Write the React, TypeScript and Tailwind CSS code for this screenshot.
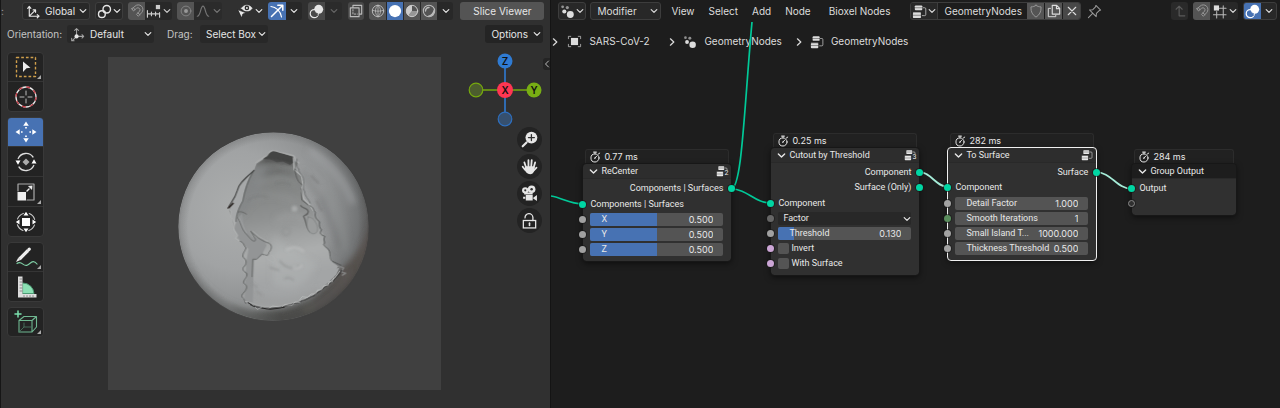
import type { ReactNode } from "react";

/* ---------- icons ---------- */

function Svg({ box = "0 0 16 16", className = "size-4", children }: { box?: string; className?: string; children: ReactNode }) {
  return (
    <svg viewBox={box} className={`${className} shrink-0`} fill="none" stroke="currentColor" strokeLinecap="round" strokeLinejoin="round" aria-hidden="true">
      {children}
    </svg>
  );
}

const Chevron = ({ className = "size-2" }: { className?: string }) => (
  <Svg box="0 0 8 8" className={className}><path d="M1.2 2.6 4 5.4 6.8 2.6" strokeWidth="1.2" /></Svg>
);
const ChevronRight = () => (
  <Svg box="0 0 8 8" className="size-2"><path d="M2.4.8 5.8 4 2.4 7.2" strokeWidth="1.2" /></Svg>
);
const AxesIcon = () => (
  <Svg className="size-[15px]">
    <path d="M3.5 3v10h10M3.5 13l6-6M1.8 4.6 3.5 2.6l1.7 2M12 11.3l2 1.7-2 1.7M7.6 6.3h2.6v2.6" strokeWidth="1.2" />
  </Svg>
);
const PivotIcon = () => (
  <Svg className="size-[15px]">
    <circle cx="10.4" cy="5.6" r="4" strokeWidth="1.5" />
    <circle cx="5.2" cy="10.8" r="3.6" strokeWidth="1.5" />
    <circle cx="7.8" cy="8.2" r="1.3" fill="currentColor" stroke="none" />
  </Svg>
);
const MagnetIcon = () => (
  <Svg className="size-[14px]">
    <path d="M2.2 5.4 5.7 2.6a5.2 5.2 0 0 1 7.6 7.3L9.6 14 7.4 11.9l3.6-3.8a2.4 2.4 0 0 0-3.4-3.3L4 8 2.2 5.4ZM5.6 6.6 3.9 4.2M9 10.2l2.3 2" strokeWidth="1.1" />
  </Svg>
);
const IncrementIcon = () => (
  <Svg className="size-[15px]">
    <path d="M1.5 7v7M14.5 9v5M1.5 10.5h13M5.8 8.5v4M10.2 8.5v4" strokeWidth="1.2" />
    <rect x="10.5" y="1" width="4.5" height="4.5" fill="currentColor" stroke="none" />
  </Svg>
);
const PropIcon = () => (
  <Svg className="size-[14px]"><circle cx="8" cy="8" r="5.6" strokeWidth="1.1" opacity=".7" /><circle cx="8" cy="8" r="2.2" fill="currentColor" stroke="none" /></Svg>
);
const CurveIcon = () => (
  <Svg className="size-[14px]"><path d="M1.5 14C5.5 14 5 2.5 8 2.5S10.500 14 14.500 14" strokeWidth="1.3" /></Svg>
);
const EyeCursorIcon = () => (
  <Svg className="size-4">
    <path d="M4.500 5.200C7 1.200 12.500 1.200 15.200 5.200 12.800 9 7.400 9 4.500 5.200Z" fill="currentColor" strokeWidth=".6" />
    <circle cx="9.900" cy="4.900" r="2.300" fill="#282828" stroke="none" />
    <circle cx="9.900" cy="4.900" r="1" fill="currentColor" stroke="none" />
    <path d="m1 6.800 8 3-3.200 1.200L4.600 14.500Z" fill="currentColor" stroke="#282828" strokeWidth=".6" />
  </Svg>
);
const GizmoIcon = () => (
  <Svg className="size-4">
    <path d="M2 3.500C7 4 11.500 8 12.500 14" strokeWidth="1.200" />
    <path d="M2.500 13.500 13.500 2.500M8.800 2.200h5v5" strokeWidth="1.500" />
  </Svg>
);
const OverlayIcon = ({ cut }: { cut: string }) => (
  <Svg className="size-[15px]">
    <circle cx="5.600" cy="10.300" r="4.300" strokeWidth="1.300" />
    <circle cx="10.300" cy="5.700" r="4.800" fill="currentColor" stroke="none" />
    <path d="M5.600 7.300a4 4 0 0 0 3.600 4.800" stroke={cut} strokeWidth="1" />
    <path d="M6.200 8a4 4 0 0 0 3.200 2.600" stroke={cut} strokeWidth=".8" />
  </Svg>
);
const XrayIcon = () => (
  <Svg className="size-[14px]">
    <path d="M1.500 4.500h10v10h-10ZM4.500 4.500v-3h10v10h-3" strokeWidth="1.300" />
    <path d="M4.500 6.500v5h5" strokeWidth="1.100" strokeDasharray="1.500 1.800" />
  </Svg>
);
const WireIcon = () => (
  <Svg className="size-[14px]"><circle cx="8" cy="8" r="6.500" strokeWidth="1.100" /><path d="M1.500 7.200c4 1.400 9 1.400 13 0M8 1.500v13M8 1.500c-4 3-4 10 0 13M8 1.500c4 3 4 10 0 13" strokeWidth=".9" /></Svg>
);
const SolidIcon = () => (
  <Svg className="size-[14px]"><circle cx="8" cy="8" r="7" fill="currentColor" stroke="none" /></Svg>
);
const MaterialIcon = () => (
  <Svg className="size-[14px]"><circle cx="8" cy="8" r="6.500" strokeWidth="1.100" /><path d="M8 1.500v6.500L3.800 13A6.500 6.500 0 0 1 8 1.500Z" fill="currentColor" stroke="none" /><path d="M8 8h6.500A6.500 6.500 0 0 1 4 13Z" fill="currentColor" stroke="none" opacity=".55" /></Svg>
);
const RenderedIcon = () => (
  <Svg className="size-[14px]"><circle cx="8" cy="8" r="6.500" strokeWidth="1.200" /><path d="M4 8a4.200 4.200 0 0 1 4-4" strokeWidth="1.600" /><path d="M13.800 7A6.500 6.500 0 0 1 7 14C10.500 13.200 13 10.500 13.800 7Z" fill="currentColor" strokeWidth="1.200" /></Svg>
);
const LocalAxesIcon = () => (
  <Svg className="size-[15px]">
    <path d="M7 10V2M5 3.600l2-2 2 2M7.500 10h7M12.800 8.200 14.600 10l-1.800 1.800M6.500 10.500l-4 4M1.800 12v2.600h2.600" strokeWidth="1.100" opacity=".65" />
    <circle cx="7" cy="10" r="2.200" fill="currentColor" stroke="none" />
  </Svg>
);
const GeoNodesIcon = ({ className = "size-[15px]" }: { className?: string }) => (
  <Svg className={className}>
    <g fill="currentColor" stroke="none">
      <circle cx="11" cy="11.200" r="3.700" />
      <circle cx="4.600" cy="8" r="2.200" />
      <circle cx="2.800" cy="3" r="1.500" opacity=".6" />
      <circle cx="7.800" cy="3.800" r="1.700" opacity=".6" />
    </g>
  </Svg>
);
const TreeIcon = ({ className = "size-[15px]" }: { className?: string }) => (
  <Svg className={className}>
    <g fill="currentColor" stroke="none">
      <rect x="3" y="1.500" width="8" height="5.200" rx="1" />
      <rect x="1" y="9.300" width="8.500" height="5.700" rx="1" />
    </g>
    <path d="M1.500 9.300h7.500M12 4h1.500a1.200 1.200 0 0 1 1.200 1.200v6a1.200 1.200 0 0 1-1.200 1.200H11" strokeWidth="1" opacity=".75" />
    <path d="M3 4h8" stroke="#282828" strokeWidth=".5" />
    <path d="M1 12h8.500" stroke="#282828" strokeWidth=".5" />
  </Svg>
);
const ObjectIcon = () => (
  <Svg className="size-[15px]">
    <rect x="4.200" y="4.200" width="7.600" height="7.600" fill="currentColor" stroke="none" />
    <path d="M1.500 5V2.500H4M12 2.500h2.500V5M14.500 11v2.500H12M4 13.500H1.500V11" strokeWidth="1" opacity=".7" />
  </Svg>
);
const ShieldIcon = () => (
  <Svg className="size-[14px]"><path d="M8 1.500c1.500 1.200 3.500 1.800 5.800 1.800C14 9 12 12.500 8 15 4 12.500 2 9 2.200 3.300 4.500 3.300 6.500 2.700 8 1.500Z" strokeWidth="1.100" /></Svg>
);
const CopyIcon = () => (
  <Svg className="size-[14px]"><path d="M6 1.500h5l3.500 3.500v6.500H6ZM10.800 1.800v3.500h3.400" strokeWidth="1.300" /><path d="M4 5H1.500v9.500H10V13" strokeWidth="1.100" /></Svg>
);
const CloseIcon = () => (
  <Svg className="size-[12px]"><path d="m3 3 10 10M13 3 3 13" strokeWidth="1.500" /></Svg>
);
const PinIcon = () => (
  <Svg className="size-[15px]"><path d="m9.500 1.500 5 5-1.500.6-3 3-.2 3.400-3.500-3.600L2.700 6.300l3.500-.2 2.900-3ZM6 10l-4.500 4.500" strokeWidth="1.100" /></Svg>
);
const ParentIcon = () => (
  <Svg className="size-[14px]"><path d="M3.500 6 7 2.500 10.500 6M7 3v10.500h6.500" strokeWidth="1.300" /></Svg>
);
const GridSnapIcon = () => (
  <Svg className="size-[15px]">
    <path d="M5 8v7M12 2v13M8 4.500h7M1.500 11.500H15" strokeWidth="1.100" opacity=".8" />
    <rect x="2" y="1.500" width="5.500" height="5.500" fill="currentColor" stroke="none" />
  </Svg>
);
const StopwatchIcon = () => (
  <Svg className="size-3"><circle cx="8" cy="9.300" r="5.400" strokeWidth="1.300" /><path d="M6 1.500h4M8 1.500v2.300M12.500 4l1.800-1.200M8 9.300l2.200-2.400M7.200 9.500h1.200" strokeWidth="1.300" /></Svg>
);

/* toolbar drawings */

const SelectTool = () => (
  <Svg box="0 0 24 24" className="size-6">
    <rect x="2.500" y="2.500" width="19" height="19" stroke="#cf9f4c" strokeWidth="1.400" strokeDasharray="2.700 2" strokeLinecap="butt" />
    <path d="m9 6.500 7.500 6.300-4 .5L9 17Z" fill="#eee" stroke="none" />
  </Svg>
);
const CursorTool = () => (
  <Svg box="0 0 24 24" className="size-6">
    <circle cx="12" cy="12" r="10" stroke="#e8e8e8" strokeWidth="1.300" />
    <circle cx="12" cy="12" r="10" stroke="#c23b45" strokeWidth="1.300" strokeDasharray="3.900 3.954" strokeLinecap="butt" />
    <path d="M12 6v4M12 14v4M6 12h4M14 12h4" stroke="#bbb" strokeWidth="1" />
  </Svg>
);
const MoveTool = () => (
  <Svg box="0 0 24 24" className="size-6">
    <path d="M12 1.500 14.800 5.700H9.200ZM12 22.500l2.800-4.200H9.200ZM1.500 12l4.200-2.800v5.600ZM22.500 12l-4.200-2.800v5.600Z" fill="#fff" stroke="none" />
    <path d="M12 7v1.600M12 15.400V17M7 12h1.600M15.400 12H17" stroke="#fff" strokeWidth="1.700" strokeLinecap="butt" />
  </Svg>
);
const RotateTool = () => (
  <Svg box="0 0 24 24" className="size-6">
    <path d="M4.200 8.500a8.600 8.600 0 0 1 14.800-1.500M19.800 15.500A8.600 8.600 0 0 1 5 17" stroke="#ddd" strokeWidth="1.300" />
    <path d="M1.500 10.500h5L4 14.700ZM17.500 13.500h5L20 9.300Z" fill="#fff" stroke="none" />
    <path d="M12 8.500 15.500 12 12 15.500 8.500 12Z" fill="#aaa" stroke="none" />
  </Svg>
);
const ScaleTool = () => (
  <Svg box="0 0 24 24" className="size-6">
    <path d="M4 11V4h16v16h-7" stroke="#aaa" strokeWidth="1.200" />
    <rect x="3.500" y="12" width="8.500" height="8.500" fill="#eee" stroke="none" />
    <path d="m13 11 2-2" stroke="#eee" strokeWidth="1.500" />
    <path d="m18.500 5.500-.5 4.600-4.100-4.100Z" fill="#eee" stroke="none" />
  </Svg>
);
const TransformTool = () => (
  <Svg box="0 0 24 24" className="size-6">
    <rect x="8" y="8" width="8" height="8" fill="#fff" stroke="none" />
    <circle cx="12" cy="12" r="9" stroke="#ccc" strokeWidth="1.100" strokeDasharray="8.140 6" strokeDashoffset="-3" />
    <path d="m12 1.800 2.500 3.700h-5ZM12 22.200l2.500-3.700h-5ZM1.800 12l3.700-2.500v5ZM22.200 12l-3.700-2.500v5Z" fill="#fff" stroke="none" />
  </Svg>
);
const AnnotateTool = () => (
  <Svg box="0 0 24 24" className="size-6">
    <path d="M3 18.500c5-3.500 6.500 4 10.500 1.500 3.500-2 5.500-6 9.500-1" stroke="#7fcfa5" strokeWidth="1.200" />
    <path d="M5.500 14 14 5.500" stroke="#eee" strokeWidth="3.200" strokeLinecap="butt" />
    <path d="m14.800 4.700.5-.5" stroke="#eee" strokeWidth="3.200" />
    <path d="M4.200 12.800 2 17l4.400-2Z" fill="#eee" stroke="none" />
  </Svg>
);
const MeasureTool = () => (
  <Svg box="0 0 24 24" className="size-6">
    <path d="M9 8a11 11 0 0 1 11 10.500H9Z" fill="#8ce0b4" stroke="#4d9b74" strokeWidth="1" />
    <path d="M4 1.500h4.500V19H22.500v3.500H4Z" fill="#ddd" stroke="none" />
    <path d="M6 4h2M6 7h2M6 10h2M6 13h2M6 16h2M10 20.500v1.500M13 20.500v1.500M16 20.500v1.500M19 20.500v1.500" stroke="#777" strokeWidth=".8" />
  </Svg>
);
const AddCubeTool = () => (
  <Svg box="0 0 24 24" className="size-6">
    <path d="M5 10.500 10 6.500H22.500V17L18 22H5ZM5 10.500h13V22M18 10.500l4.500-4" stroke="#6fb791" strokeWidth="1.100" />
    <path d="M10 13v4l-5 5M10 17h8" stroke="#4d7c64" strokeWidth=".8" />
    <path d="M4 1v6M1 4h6" stroke="#7be0ad" strokeWidth="1.500" />
  </Svg>
);

/* navigation drawings */

const ZoomNav = () => (
  <Svg className="size-[17px]"><circle cx="9.800" cy="6.200" r="5.600" fill="#e6e6e6" stroke="none" /><path d="m5.200 10.800-3.600 3.600" stroke="#e6e6e6" strokeWidth="2" /><path d="M9.800 3.400V9M7 6.200h5.600" stroke="#303030" strokeWidth="1.200" /></Svg>
);
const PanNav = () => (
  <Svg className="size-[17px]">
    <path d="M4.800 9 3.200 4.200M7 8V2M9.600 8l.5-6M12 8.800l1.300-4.600M3.800 11 1.600 8.200" stroke="#e6e6e6" strokeWidth="1.700" />
    <path d="M4 7.800h8.800c.3 3.400-.5 7.400-4.200 7.400-2.900 0-4.200-2-5.400-4.700Z" fill="#e6e6e6" stroke="none" />
    <path d="m11.800 12 2.800-3" stroke="#e6e6e6" strokeWidth="1.600" />
  </Svg>
);
const CameraNav = () => (
  <Svg className="size-[17px]">
    <g fill="#e6e6e6" stroke="none">
      <circle cx="4" cy="5" r="3" /><circle cx="10" cy="4" r="3.600" />
      <path d="M3 7h8v2H3ZM4.500 9.500H11v5H4.500ZM11.500 12l3.500-2.500v5.500l-3.500-2.300ZM2 11h2v2H2Z" />
    </g>
    <circle cx="4" cy="5" r="1" fill="#303030" stroke="none" /><circle cx="10" cy="4" r="1.200" fill="#303030" stroke="none" />
  </Svg>
);
const LockNav = () => (
  <Svg className="size-[17px]"><rect x="2.200" y="8" width="11.600" height="7" stroke="#e6e6e6" strokeWidth="1.200" strokeLinejoin="miter" /><path d="M3.800 5.500a3.600 3.600 0 0 1 7.400-.5V8" stroke="#e6e6e6" strokeWidth="1.200" /><path d="M8 10.500v2.200" stroke="#e6e6e6" strokeWidth="1.500" /></Svg>
);

/* ---------- header controls ---------- */

const dark = "border border-[#3d3d3d] bg-[#282828]";

function Cell({ label, className = "", children }: { label: string; className?: string; children: ReactNode }) {
  return (
    <button type="button" aria-label={label} className={`flex h-full items-center justify-center ${className}`}>
      {children}
    </button>
  );
}

function Group({ className = "", children }: { className?: string; children: ReactNode }) {
  return <div className={`flex h-[18px] shrink-0 items-center overflow-hidden rounded-[3px] ${className}`}>{children}</div>;
}

function Dropdown({ label, value, icon, className = "", pad }: { label: string; value: string; icon?: ReactNode; className?: string; pad: string }) {
  return (
    <div className={`relative flex h-[18px] shrink-0 items-center rounded-[3px] ${dark} ${className}`}>
      {icon && <span className="pointer-events-none absolute left-[3px]">{icon}</span>}
      <select aria-label={label} className={`h-full w-full appearance-none bg-transparent outline-none ${pad}`}>
        <option>{value}</option>
      </select>
      <span className="pointer-events-none absolute right-[2px]"><Chevron /></span>
    </div>
  );
}

/* ---------- 3D viewport ---------- */

function ViewportHeader() {
  return (
    <header className="bg-[#303030] text-[10px] text-[#e6e6e6]">
      <div className="flex h-[22px] items-center whitespace-nowrap">
        <span className="w-[21px] text-[#999]">:</span>
        <Dropdown label="Transform orientation" value="Global" icon={<AxesIcon />} pad="pl-[22px]" className="w-[68px]" />
        <Group className={`ml-[5px] w-7 ${dark}`}>
          <Cell label="Pivot point" className="w-full gap-px"><PivotIcon /><Chevron /></Cell>
        </Group>
        <Group className="ml-[5px] w-[44px] bg-[#282828]">
          <Cell label="Snap" className="w-[17px] bg-[#545454] text-[#999]"><MagnetIcon /></Cell>
          <Cell label="Snap to" className="flex-1 gap-[2px] text-[#ccc]"><IncrementIcon /><Chevron /></Cell>
        </Group>
        <Group className="ml-[5px] w-[45px] bg-[#2b2b2b]">
          <Cell label="Proportional editing" className="w-[17px] bg-[#545454] text-[#999]"><PropIcon /></Cell>
          <Cell label="Falloff" className="flex-1 gap-[3px] text-[#777]"><CurveIcon /><Chevron /></Cell>
        </Group>
        <Group className="ml-[14px] w-[28px]">
          <Cell label="Object types visibility" className="w-full gap-[2px]"><EyeCursorIcon /><Chevron /></Cell>
        </Group>
        <Group className="ml-1 w-[34px] bg-[#282828]">
          <Cell label="Show gizmo" className="w-[18px] bg-[#4772b3] text-white"><GizmoIcon /></Cell>
          <Cell label="Gizmo options" className="flex-1"><Chevron /></Cell>
        </Group>
        <Group className="ml-[6px] w-[34px] bg-[#2b2b2b]">
          <Cell label="Show overlays" className="w-[17px] bg-[#484848]"><OverlayIcon cut="#484848" /></Cell>
          <Cell label="Overlay options" className="flex-1 text-[#666]"><Chevron /></Cell>
        </Group>
        <Group className="ml-[6px] w-4 bg-[#484848]">
          <Cell label="Toggle X-Ray" className="w-full text-[#bbb]"><XrayIcon /></Cell>
        </Group>
        <Group className="ml-[5px] w-[84px] gap-px bg-[#282828]">
          <Cell label="Wireframe" className="w-[17px] bg-[#545454] text-[#bbb]"><WireIcon /></Cell>
          <Cell label="Solid" className="w-4 bg-[#4772b3] text-white"><SolidIcon /></Cell>
          <Cell label="Material preview" className="w-4 bg-[#545454] text-[#ccc]"><MaterialIcon /></Cell>
          <Cell label="Rendered" className="w-4 bg-[#545454] text-[#bbb]"><RenderedIcon /></Cell>
          <Cell label="Shading options" className="flex-1"><Chevron /></Cell>
        </Group>
        <button type="button" className="mr-[6px] ml-auto h-[18px] w-[84px] shrink-0 rounded-[3px] bg-[#545454]">Slice Viewer</button>
      </div>
      <div className="flex h-6 items-center whitespace-nowrap">
        <label htmlFor="orientation" className="w-[66px] shrink-0 pl-[6px] text-[#c4c4c4]">Orientation:</label>
        <div className="relative flex h-[18px] w-[87px] shrink-0 items-center rounded-[3px] bg-[#282828]">
          <span className="pointer-events-none absolute left-[3px]"><LocalAxesIcon /></span>
          <select id="orientation" className="h-full w-full appearance-none bg-transparent pl-[23px] outline-none"><option>Default</option></select>
          <span className="pointer-events-none absolute right-[2px]"><Chevron /></span>
        </div>
        <label htmlFor="drag" className="ml-[13px] w-[33px] shrink-0 text-[#c4c4c4]">Drag:</label>
        <div className="relative flex h-[18px] w-[68px] shrink-0 items-center rounded-[3px] bg-[#282828]">
          <select id="drag" className="h-full w-full appearance-none bg-transparent pl-[6px] outline-none"><option>Select Box</option></select>
          <span className="pointer-events-none absolute right-[2px]"><Chevron /></span>
        </div>
        <button type="button" className="mr-[7px] ml-auto flex h-[18px] w-[58px] shrink-0 items-center justify-between rounded-[3px] bg-[#242424] pr-[2px] pl-[6px]">
          Options<Chevron />
        </button>
      </div>
    </header>
  );
}

type Tool = { name: string; icon: ReactNode; active?: boolean; more?: boolean };

const toolGroups: Tool[][] = [
  [
    { name: "Select Box", icon: <SelectTool />, more: true },
    { name: "Cursor", icon: <CursorTool /> },
  ],
  [
    { name: "Move", icon: <MoveTool />, active: true },
    { name: "Rotate", icon: <RotateTool /> },
    { name: "Scale", icon: <ScaleTool />, more: true },
    { name: "Transform", icon: <TransformTool /> },
  ],
  [
    { name: "Annotate", icon: <AnnotateTool />, more: true },
    { name: "Measure", icon: <MeasureTool /> },
  ],
  [{ name: "Add Cube", icon: <AddCubeTool />, more: true }],
];

function Toolbar() {
  return (
    <nav aria-label="Tools" className="flex flex-1 flex-col gap-[5px] pt-[6px] pl-[6px]">
      {toolGroups.map((group) => (
        <div key={group[0].name} className="flex w-[37px] flex-col overflow-hidden rounded-[4px] border border-[#393939] bg-[#232323]">
          {group.map((tool, i) => (
            <button
              key={tool.name}
              type="button"
              aria-label={tool.name}
              className={`relative flex items-center justify-center ${i > 0 ? "h-[30px] border-t border-[#353535]" : "h-7"} ${tool.active ? "bg-[#4772b3]" : ""}`}
            >
              {tool.icon}
              {tool.more && (
                <svg viewBox="0 0 4 4" className="absolute right-[2px] bottom-[2px] size-1" aria-hidden="true"><path d="M4 0v4H0Z" fill="#aaa" /></svg>
              )}
            </button>
          ))}
        </div>
      ))}
    </nav>
  );
}

function Model() {
  return (
    <svg viewBox="-183 -189 996 996" className="block size-full" role="img" aria-label="Hollow sphere model with a cut surface">
      <defs>
        <radialGradient id="shell" gradientUnits="userSpaceOnUse" cx="205" cy="270" r="440">
          <stop offset="0" stopColor="#abadad" />
          <stop offset=".4" stopColor="#a1a3a4" />
          <stop offset=".65" stopColor="#8f9192" />
          <stop offset=".82" stopColor="#737576" />
          <stop offset="1" stopColor="#4b4745" />
        </radialGradient>
        <radialGradient id="edge" gradientUnits="userSpaceOnUse" cx="312" cy="318" r="285">
          <stop offset=".9" stopColor="#444" stopOpacity="0" />
          <stop offset=".98" stopColor="#444" stopOpacity=".2" />
          <stop offset="1" stopColor="#333" stopOpacity=".4" />
        </radialGradient>
        <linearGradient id="band" gradientUnits="userSpaceOnUse" x1="200" y1="540" x2="600" y2="400">
          <stop offset="0" stopColor="#6c6e6d" />
          <stop offset=".25" stopColor="#4d4e4c" />
          <stop offset=".7" stopColor="#4f4c49" />
          <stop offset="1" stopColor="#5e5753" />
        </linearGradient>
        <linearGradient id="inner" gradientUnits="userSpaceOnUse" x1="310" y1="95" x2="385" y2="470">
          <stop offset="0" stopColor="#555655" />
          <stop offset=".14" stopColor="#7b7d7c" />
          <stop offset=".5" stopColor="#909292" />
          <stop offset=".8" stopColor="#acaeae" />
          <stop offset="1" stopColor="#a3a5a6" />
        </linearGradient>
        <filter id="soft" x="-30%" y="-30%" width="160%" height="160%"><feGaussianBlur stdDeviation="9" /></filter>
        <filter id="softer" x="-50%" y="-50%" width="200%" height="200%"><feGaussianBlur stdDeviation="3" /></filter>
        <clipPath id="ball"><ellipse cx="312" cy="318" rx="285" ry="282" /></clipPath>
        <clipPath id="hole">
          <path d="M298 98 312 91 332 96 350 103 372 110 374 124 386 126 377 146 397 168 400 194 394 210 402 236 418 252 430 270 434 290 448 304 450 324 463 345 462 370 478 390 488 424 510 440 500 462 480 482 455 505 430 525 400 540 370 551 330 560 290 562 250 552 225 542 218 528 232 505 222 490 234 470 222 455 228 430 220 410 232 385 218 365 200 352 205 342 195 325 190 300 178 265 192 240 205 210 210 195 230 170 255 150 262 130 280 118Z" />
        </clipPath>
      </defs>
      <g clipPath="url(#ball)">
        <ellipse cx="312" cy="318" rx="285" ry="282" fill="url(#shell)" />
        <g filter="url(#soft)">
          <path d="M420 90c60 40 110 100 130 160" stroke="#a6a8a9" strokeWidth="22" fill="none" opacity=".5" />
          <path d="M470 210c30 40 55 110 55 180" stroke="#8b8d8e" strokeWidth="16" fill="none" opacity=".6" />
          <path d="M455 235c20 50 40 90 55 150" stroke="#696b6c" strokeWidth="12" fill="none" opacity=".6" />
          <path d="M400 150c10 30 40 70 60 90" stroke="#6f7172" strokeWidth="10" fill="none" opacity=".5" />
          <path d="M60 440c40 60 90 100 150 120l100 60H60Z" fill="#737574" opacity=".6" />
          <path d="M610 300c-20 60-50 110-100 150l-30 40-60 50-80 25-90 5-70-20 60 80 160 10 150-80 80-160Z" fill="url(#band)" />
        </g>
        <path d="M540 450c-30 60-80 100-140 122" stroke="#6d6b69" strokeWidth="12" fill="none" opacity=".6" filter="url(#soft)" />
        <ellipse cx="312" cy="318" rx="285" ry="282" fill="url(#edge)" />
      </g>

      <g clipPath="url(#hole)">
        <rect x="160" y="80" width="370" height="500" fill="url(#inner)" />
        <g filter="url(#soft)">
          <path d="M250 130c-20 60-40 100-50 170l70-80 30-80Z" fill="#858788" opacity=".8" />
          <path d="M265 190c40-20 90-20 115 0M240 240c50-25 90-20 140 5" stroke="#a0a2a2" strokeWidth="9" fill="none" opacity=".35" />
          <path d="M280 165c30-15 60-14 90 0" stroke="#565857" strokeWidth="12" fill="none" opacity=".5" />
          <path d="M310 340c40 40 90 60 130 90-20 60-70 90-130 60" fill="#b8baba" opacity=".35" />
          <path d="M320 300c30-20 60-20 90 0" stroke="#a8aaaa" strokeWidth="12" fill="none" opacity=".5" />
          <path d="M225 480c40 60 140 70 220 20l20 60H210Z" fill="#979999" opacity=".5" />
        </g>
        <path d="M198 300c-5 30 5 45 15 60l25 25-8 40-5 130 25 0 2-90 2-45 22-15 15-30-8-20-35-6-22-30-8-40Z" fill="#939596" />
        <path d="M252 150c-20 30-28 60-32 90-12 22-20 40-20 68l-10 14-8-60 25-60Z" fill="#a6a8a9" />
        <path d="M276 116c10-10 14-24 36-26l62 20 2 14-14 10-22-10-18 2-18-8Z" fill="#434443" />
        <path d="M285 122c20-4 40 2 60 6l24 6" stroke="#555" strokeWidth="5" fill="none" filter="url(#softer)" />
        <path d="M252 152c-16 28-26 58-32 90-14 24-20 44-20 62" stroke="#4a4c4b" strokeWidth="2" fill="none" />
      </g>

      <g fill="none" strokeLinejoin="round" strokeLinecap="round">
        <path d="M205 275c10-3 17 0 26 6M206 292c10 18 11 34 22 46l18 20c10 8 16 2 10-6l-12-20c22 22 30 26 48 34 16 2 18 18 6 30 0 10-8 10-20 4l-16 16h-12l-2 52" stroke="#626463" strokeWidth="2.500" />
        <path d="M209 292c10 16 11 32 22 44M250 332c24 20 30 24 46 30M286 404c6 12 18 18 26 22 8-6 8-14-6-22" stroke="#b4b6b6" strokeWidth="2" opacity=".8" />
        <path d="M178 262c0-10 18-22 26-52 4-22 24-36 50-60" stroke="#3a3b3a" strokeWidth="3" />
        <path d="M177 263l14-14" stroke="#2b2522" strokeWidth="5" />
        <path d="M178 265l8 8-2 14 12 20-3 20 12 18-7 8 14 10" stroke="#b0b2b2" strokeWidth="3" />
        <path d="M212 362c12 4 10 12 18 20-4 12-12 16-9 28 10 6 10 16 7 24-12 8-8 18 4 24 4 14-12 18-9 30 14 8 10 18-2 30-6 6-4 12 2 16l6 14" stroke="#585a59" strokeWidth="2.500" />
        <path d="M258 128c10-8 20-14 34-22 8-14 14-20 40-10l40 10c8 6 4 16 16 22" stroke="#a9abab" strokeWidth="4" />
        <path d="M372 112l2 36 22 18 5 28-6 16 8 26 16 16 12 18" stroke="#b5b7b7" strokeWidth="4" />
        <path d="M382 116c2 10-6 18 6 30-2 12 14 18 14 34 4 12-6 20 4 34-2 12 12 22 16 34" stroke="#686a6a" strokeWidth="2.500" />
        <path d="M376 146c2 16 6 38 20 46M395 205l2 34 18 14" stroke="#505251" strokeWidth="2.500" />
        <path d="M394 256c8 10 18 6 22 16 0 14-10 10-14 16 10 14 4 30 20 46" stroke="#515352" strokeWidth="4" opacity=".75" />
        <path d="M416 290c-8 20-4 46 14 50 16 0 18-18 8-34-8-14-14-14-22-16Z" fill="#9b9d9d" stroke="#727474" strokeWidth="1.500" />
        <path d="M420 256c14 4 10 14 18 20-4 12 2 20 12 28-2 12 0 18 6 24-8 12-2 14 10 20-8 12 4 16-4 24 4 10 16 10 18 22 2 12 0 26 12 30l22 10-10 8" stroke="#4c4e4d" strokeWidth="2.500" />
        <path d="M506 436l16 6-8 12 14 4-10 6" stroke="#858585" strokeWidth="4" />
        <path d="M516 450c-8 18-18 18-24 30-12 4-16 16-28 20-10 14-24 14-32 26-12 2-22 14-34 14-10 10-22 4-32 12-14 0-20 8-34 8-30 6-60 4-88-8" stroke="#363636" strokeWidth="5" opacity=".6" />
        <path d="M510 452c-8 10-12 20-20 24-8 8-16 16-26 20-10 14-24 14-32 24-12 4-24 14-36 16-10 10-22 6-32 12-14 2-24 6-34 8-30 4-54 4-80-8l-22-6" stroke="#a5a7a7" strokeWidth="3" />
        <path d="M492 472l-4 12-10-2-2 12-14 2-6 12-12 0-6 12-14 0-10 10-16-2-8 10M392 546l-16-2-8 10-22-2-10 8-26-4-14 8-20-4-12 6-16-14" stroke="#c6c8c8" strokeWidth="1.500" />
        <path d="M278 562c20 6 40 4 66-2M236 546c8 2 10 10 20 12" stroke="#292929" strokeWidth="3" />
      </g>
      <g fill="none" filter="url(#softer)">
        <circle cx="350" cy="333" r="11" stroke="#8f9191" strokeWidth="3" />
        <circle cx="375" cy="265" r="9" fill="#a8aaaa" />
        <path d="M330 420c16 20 40 30 60 14M300 440l30 10M345 475c10-8 20-2 28 4M250 490l14 12M260 510l18 14" stroke="#8c8e8e" strokeWidth="3" />
        <path d="M350 390c14-14 40-10 54 4M370 440c10 4 20 2 28-6" stroke="#bec0c0" strokeWidth="8" opacity=".6" />
        <path d="M320 190c16-6 36-4 44 4M290 152c20 6 30-2 50 0M235 240c20-14 40-16 60-10" stroke="#696b6b" strokeWidth="3" opacity=".5" />
        <path d="M425 165c6 14 18 14 22 26M440 240c10 14 6 22 18 30" stroke="#777" strokeWidth="5" opacity=".7" />
      </g>
    </svg>
  );
}

function AxisGizmo() {
  return (
    <svg viewBox="0 0 74 74" className="size-[74px]" role="img" aria-label="View axes">
      <path d="M37 9v56" stroke="#2f7fdc" strokeWidth="1.500" />
      <path d="M8 37h58" stroke="#76a90d" strokeWidth="1.500" />
      <circle cx="8" cy="37" r="6.800" fill="#4c5d2e" stroke="#76a90d" strokeWidth="1.200" />
      <circle cx="37" cy="66" r="6.800" fill="#36506f" stroke="#2e6fbf" strokeWidth="1.200" />
      <circle cx="37" cy="8" r="7.500" fill="#2f7bd3" />
      <circle cx="66" cy="37" r="7.500" fill="#78ae14" />
      <circle cx="37" cy="37" r="8" fill="#ff3652" />
      <g fill="#111" fontSize="10" fontWeight="600" textAnchor="middle" fontFamily="Inter, sans-serif">
        <text x="37" y="11.600">Z</text>
        <text x="66" y="40.600">Y</text>
        <text x="37" y="40.600">X</text>
      </g>
    </svg>
  );
}

const navButtons = [
  { name: "Zoom view", icon: <ZoomNav /> },
  { name: "Pan view", icon: <PanNav /> },
  { name: "Camera view", icon: <CameraNav /> },
  { name: "Lock camera to view", icon: <LockNav /> },
];

function Viewport() {
  return (
    <section aria-label="3D viewport" className="flex w-[43%] shrink-0 flex-col border-l border-[#161616] bg-[#303030]">
      <ViewportHeader />
      <div className="relative flex flex-1 pb-[18px]">
        <Toolbar />
        <div className="mt-[11px] aspect-square w-[60.6%] self-start bg-[#404040]"><Model /></div>
        <div className="flex flex-1 flex-col items-end pt-[7px] pr-2">
          <AxisGizmo />
          <div className="flex flex-col gap-[2px]">
            {navButtons.map((b) => (
              <button key={b.name} type="button" aria-label={b.name} className="flex size-[25px] items-center justify-center rounded-full bg-[#232323]">{b.icon}</button>
            ))}
          </div>
        </div>
        <button type="button" aria-label="Open sidebar" className="absolute top-3 right-0 flex h-3 w-[7px] items-center justify-center rounded-l-[3px] bg-[#242424] text-[#bbb]">
          <Svg box="0 0 6 8" className="h-2 w-1.5"><path d="M4.500 1 1.500 4l3 3" /></Svg>
        </button>
      </div>
    </section>
  );
}

/* ---------- node editor ---------- */

function NodeHeader() {
  return (
    <header className="flex h-[22px] items-center bg-[#1d1d1d] pl-[7px] text-[10px] whitespace-nowrap text-[#dcdcdc]">
      <Group className={`w-7 ${dark}`}>
        <Cell label="Editor type" className="w-full gap-px"><GeoNodesIcon /><Chevron /></Cell>
      </Group>
      <Dropdown label="Node tree type" value="Modifier" pad="pl-[6px]" className="ml-1 w-[71px]" />
      <nav aria-label="Menus" className="ml-[10px] flex items-center gap-[14px]">
        <button type="button">View</button>
        <button type="button">Select</button>
        <button type="button">Add</button>
        <button type="button">Node</button>
        <button type="button" className="ml-1">Bioxel Nodes</button>
      </nav>
      <Group className="ml-5 w-[171px] border border-[#3d3d3d] bg-[#1d1d1d]">
        <Cell label="Browse node trees" className="w-[27px] gap-px border-r border-[#3d3d3d] bg-[#282828]"><TreeIcon /><Chevron /></Cell>
        <input aria-label="Node tree name" defaultValue="GeometryNodes" className="h-full min-w-0 flex-1 bg-transparent pl-[6px] outline-none" />
        <Cell label="Fake user" className="w-[17px] bg-[#545454] text-[#999]"><ShieldIcon /></Cell>
        <Cell label="Duplicate" className="ml-px w-[17px] bg-[#545454]"><CopyIcon /></Cell>
        <Cell label="Unlink" className="ml-px w-[17px] bg-[#484848]"><CloseIcon /></Cell>
      </Group>
      <button type="button" aria-label="Pin" className="ml-[6px] text-[#999]"><PinIcon /></button>
      <div className="ml-auto flex items-center gap-[5px] pr-[3px]">
        <Group className="w-[17px] bg-[#2a2a2a]"><Cell label="Parent node tree" className="w-full text-[#5a5a5a]"><ParentIcon /></Cell></Group>
        <Group className="w-[45px] bg-[#282828]">
          <Cell label="Snap" className="w-[17px] bg-[#545454] text-[#999]"><MagnetIcon /></Cell>
          <Cell label="Snap to" className="flex-1 gap-[2px]"><GridSnapIcon /><Chevron /></Cell>
        </Group>
        <Group className={`w-[34px] ${dark}`}>
          <Cell label="Show overlays" className="w-[17px] bg-[#4772b3] text-white"><OverlayIcon cut="#4772b3" /></Cell>
          <Cell label="Overlay options" className="flex-1"><Chevron /></Cell>
        </Group>
      </div>
    </header>
  );
}

const sockets = {
  geometry: "bg-[#00d6a3]",
  float: "bg-[#a1a1a1]",
  int: "bg-[#598c5c]",
  bool: "bg-[#cca6d6]",
  menu: "bg-[#666666]",
  empty: "border border-[#888] bg-[#303030]",
};
type Kind = keyof typeof sockets;

function Row({ socket, side = "left", children }: { socket: Kind; side?: "left" | "right"; children?: ReactNode }) {
  return (
    <div className={`relative flex h-[15px] items-center pr-2 pl-[7px] ${side === "right" ? "justify-end" : ""}`}>
      <span className={`absolute size-[7px] rounded-full ring-1 ring-[#181818]/60 ${side === "right" ? "-right-1" : "-left-1"} ${sockets[socket]}`} />
      {children}
    </div>
  );
}

function Field({ label, value, fill = 0, socket = "float" }: { label: string; value: string; fill?: number; socket?: Kind }) {
  return (
    <Row socket={socket}>
      <label className="relative flex h-[13px] w-full items-center justify-between overflow-hidden rounded-[2px] bg-[#545454] pr-[10px] pl-[11px]">
        <span className="absolute inset-y-0 left-0 bg-[#4772b3]" style={{ width: `${fill}%` }} />
        <span className="relative whitespace-nowrap">{label}</span>
        <input defaultValue={value} size={1} className="relative h-full min-w-0 flex-1 bg-transparent text-right font-['Inter',sans-serif] outline-none" />
      </label>
    </Row>
  );
}

function Check({ label }: { label: string }) {
  return (
    <Row socket="bool">
      <label className="flex items-center gap-[2px]">
        <input type="checkbox" className="size-[11px] appearance-none rounded-[2px] bg-[#545454]" />
        {label}
      </label>
    </Row>
  );
}

function Node({ title, time, place, badge, group, output, active, children }: {
  title: string; time: string; place: string; badge?: string; group?: boolean; output?: boolean; active?: boolean; children: ReactNode;
}) {
  return (
    <article className={`absolute font-['Roboto',sans-serif] text-[9px] leading-[13px] text-[#e8e8e8] ${place}`}>
      <div className="mx-[2px] flex h-[15px] items-center gap-[3px] rounded-t-[3px] border border-b-0 border-[#2c2c2c] bg-[#212121] px-[3px] pb-px font-['Inter',sans-serif]">
        <StopwatchIcon />{time}
      </div>
      <div className={`rounded-[3px] bg-[#303030] pb-1 shadow-[0_2px_6px_rgba(0,0,0,0.6)] ${active ? "outline outline-[#f0f0f0]" : "outline outline-[#171717]"}`}>
        <h3 className={`flex h-[15px] items-center rounded-t-[3px] border-b border-[#292929] pr-[3px] pl-[6px] ${output ? "bg-[#1d1d1d]" : "bg-[#2d2d2d]"}`}>
          <Chevron className="mr-[3px] size-[9px]" />
          {title}
          {group && (
            <span className="ml-auto flex items-end">
              <TreeIcon className="size-3" />
              {badge && <span className="-ml-1 rounded-tl-[2px] bg-[#2d2d2d] text-[7px] leading-[7px]">{badge}</span>}
            </span>
          )}
        </h3>
        <div className="pt-[2px]">{children}</div>
      </div>
    </article>
  );
}

function Links() {
  return (
    <svg className="pointer-events-none absolute inset-0 size-full" fill="none" strokeWidth="1.700" aria-hidden="true">
      <g stroke="#00c998">
        <path d="M0 174C12 176 18 182 32 182" />
        <path d="M180 167C191 167 193 88 201 0" />
        <path d="M180 167C197 167 203 181 220 181" />
      </g>
      <g stroke="#a5ecd8">
        <path d="M368 150C380 150 385 165 397 165" />
        <path d="M545 150C560 150 566 167 581 167" />
      </g>
    </svg>
  );
}

function NodeEditor() {
  return (
    <section aria-label="Node editor" className="flex min-w-0 flex-1 flex-col border-l border-[#141414] bg-[#1d1d1d]">
      <NodeHeader />
      <div className="relative flex-1 overflow-hidden">
        <nav aria-label="Tree path" className="flex h-[39px] items-center text-[10px] text-[#dcdcdc]">
          <ChevronRight />
          <span className="ml-2 flex items-center gap-[7px]"><ObjectIcon /><span className="w-[66px]">SARS-CoV-2</span></span>
          <span className="mr-[7px] ml-[13px] flex"><ChevronRight /></span>
          <span className="flex items-center gap-[7px]"><GeoNodesIcon className="size-[14px]" />GeometryNodes</span>
          <span className="mr-[7px] ml-[13px] flex"><ChevronRight /></span>
          <span className="flex items-center gap-[7px]"><TreeIcon className="size-[14px]" />GeometryNodes</span>
        </nav>

        <Links />

        <Node title="ReCenter" time="0.77 ms" group badge="2" place="left-[32px] top-[127px] w-[148px]">
          <Row socket="geometry" side="right">Components | Surfaces</Row>
          <div className="pt-px">
            <Row socket="geometry">Components | Surfaces</Row>
            <Field label="X" value="0.500" fill={50} />
            <Field label="Y" value="0.500" fill={50} />
            <Field label="Z" value="0.500" fill={50} />
          </div>
        </Node>

        <Node title="Cutout by Threshold" time="0.25 ms" group badge="3" place="left-[220px] top-[111px] w-[148px]">
          <Row socket="geometry" side="right">Component</Row>
          <Row socket="geometry" side="right">Surface (Only)</Row>
          <div className="pt-px">
            <Row socket="geometry">Component</Row>
            <Row socket="menu">
              <select aria-label="Mode" className="h-[13px] w-full appearance-none rounded-[2px] bg-[#282828] pl-[5px] outline-none"><option>Factor</option></select>
              <span className="pointer-events-none absolute right-2"><Chevron /></span>
            </Row>
            <Field label="Threshold" value="0.130" fill={12} />
            <Check label="Invert" />
            <Check label="With Surface" />
          </div>
        </Node>

        <Node title="To Surface" time="282 ms" group active place="left-[397px] top-[111px] w-[148px]">
          <Row socket="geometry" side="right">Surface</Row>
          <Row socket="geometry">Component</Row>
          <div className="pt-px">
            <Field label="Detail Factor" value="1.000" />
            <Field label="Smooth Iterations" value="1" socket="int" />
            <Field label="Small Island T..." value="1000.000" />
            <Field label="Thickness Threshold" value="0.500" />
          </div>
        </Node>

        <Node title="Group Output" time="284 ms" output place="left-[581px] top-[127px] w-[104px]">
          <Row socket="geometry">Output</Row>
          <Row socket="empty" />
        </Node>
      </div>
    </section>
  );
}

export default function App() {
  return (
    <main className="flex min-h-screen overflow-hidden bg-[#1d1d1d] font-['Inter',sans-serif]">
      <Viewport />
      <NodeEditor />
    </main>
  );
}
